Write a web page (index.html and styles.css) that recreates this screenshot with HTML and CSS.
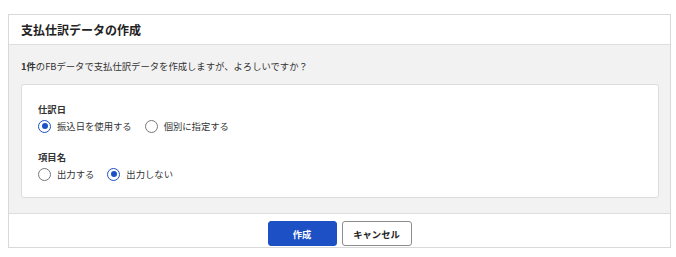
FILE: index.html
```html
<!DOCTYPE html>
<html lang="ja">
<head>
    <meta charset="UTF-8">
    <meta name="viewport" content="width=device-width, initial-scale=1.0">
    <title>支払仕訳データの作成</title>
    <link rel="stylesheet" href="styles.css">
</head>
<body>
    <div class="dialog">
        <div class="dialog-header">支払仕訳データの作成</div>
        <div class="dialog-body">
            <p class="message"><strong>1件</strong>のFBデータで支払仕訳データを作成しますが、よろしいですか？</p>
            <div class="card">
                <div class="field">
                    <div class="field-label">仕訳日</div>
                    <div class="options">
                        <label class="option"><span class="radio checked"></span>振込日を使用する</label>
                        <label class="option"><span class="radio"></span>個別に指定する</label>
                    </div>
                </div>
                <div class="field">
                    <div class="field-label">項目名</div>
                    <div class="options">
                        <label class="option"><span class="radio"></span>出力する</label>
                        <label class="option"><span class="radio checked"></span>出力しない</label>
                    </div>
                </div>
            </div>
        </div>
        <div class="dialog-footer">
            <button class="btn btn-primary">作成</button>
            <button class="btn btn-default">キャンセル</button>
        </div>
    </div>
</body>
</html>
```

FILE: styles.css
```css
/* General styles */
body {
    font-family: "Noto Sans CJK JP", "Noto Sans", sans-serif;
    margin: 0;
    padding: 0;
    background-color: #fff;
    color: #333;
}

.dialog {
    box-sizing: border-box;
    width: 663px;
    margin: 14px 0 0 8px;
    border: 1px solid #d9d9d9;
    background-color: #fff;
}

.dialog-header {
    height: 29px;
    line-height: 29px;
    padding: 0 12px;
    font-size: 12px;
    font-weight: bold;
    color: #222;
    border-bottom: 1px solid #dedede;
}

.dialog-body {
    background-color: #f2f2f2;
    padding: 14px 11px 15px 12px;
}

.message {
    margin: 0 0 11px;
    font-size: 9.33px;
    line-height: 14px;
}

.card {
    background-color: #fff;
    border: 1px solid #dcdcdc;
    border-radius: 3px;
    padding: 17px 16px 15px 16px;
    display: flex;
    flex-direction: column;
    gap: 16px;
}

.field-label {
    font-size: 9.33px;
    line-height: 14px;
    font-weight: bold;
    color: #333;
    margin-bottom: 2px;
}

.options {
    display: flex;
    gap: 13px;
}

.option {
    display: flex;
    align-items: center;
    height: 16px;
    font-size: 9.33px;
    color: #333;
    cursor: pointer;
}

.radio {
    box-sizing: border-box;
    width: 13px;
    height: 13px;
    margin-right: 6px;
    border: 1px solid #777;
    border-radius: 50%;
    display: flex;
    align-items: center;
    justify-content: center;
    background-color: #fff;
}

.radio.checked {
    border: 1.5px solid #1c50c4;
}

.radio.checked::after {
    content: "";
    width: 6px;
    height: 6px;
    border-radius: 50%;
    background-color: #1c50c4;
}

.dialog-footer {
    display: flex;
    justify-content: center;
    gap: 5px;
    padding: 7px 0 1px;
    border-top: 1px solid #dedede;
}

.btn {
    box-sizing: border-box;
    height: 25px;
    width: 69px;
    border-radius: 3px;
    font-family: inherit;
    font-size: 9.33px;
    font-weight: bold;
    cursor: pointer;
}

.btn-primary {
    background-color: #1c50c4;
    border: 1px solid #1c50c4;
    color: #fff;
}

.btn-default {
    width: 70px;
    background-color: #fff;
    border: 1px solid #8c8c8c;
    color: #222;
}
```
